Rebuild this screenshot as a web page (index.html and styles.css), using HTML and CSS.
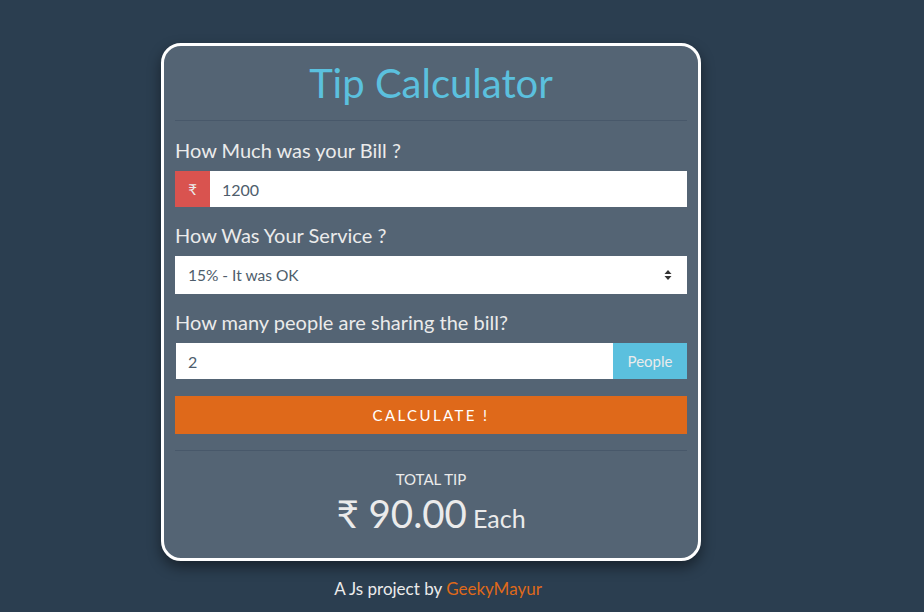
FILE: index.html
```html
<!DOCTYPE html>
<html>
<head>
<meta charset="utf-8">
<link rel="stylesheet" href="styles.css">
</head>
<body>
<div class="page">
  <div class="card">
    <h1 class="title">Tip Calculator</h1>
    <hr class="rule">
    <label class="label">How Much was your Bill ?</label>
    <div class="group">
      <span class="addon addon-red">₹</span>
      <input class="field" type="text" value="1200">
    </div>
    <label class="label">How Was Your Service ?</label>
    <div class="select">
      <span>15% - It was OK</span>
      <svg class="caret" width="8" height="12" viewBox="0 0 8 12"><path d="M4 1 L7.5 5 H0.5 Z M4 11 L7.5 7 H0.5 Z" fill="#333"/></svg>
    </div>
    <label class="label">How many people are sharing the bill?</label>
    <div class="group">
      <input class="field field-left" type="text" value="2">
      <span class="addon addon-blue">People</span>
    </div>
    <button class="btn">CALCULATE !</button>
    <hr class="rule rule-bottom">
    <div class="total">
      <div class="total-label">TOTAL TIP</div>
      <div class="total-amount"><span class="amount">₹ 90.00</span> <span class="each">Each</span></div>
    </div>
  </div>
  <footer class="footer">A Js project by <a class="link">GeekyMayur</a></footer>
</div>
</body>
</html>
```
FILE: styles.css
```css
* { box-sizing: border-box; }
html, body { margin: 0; padding: 0; }
body {
  background: #2b3e50;
  font-family: Lato, "Open Sans", sans-serif;
  color: #ebebeb;
  height: 612px;
  overflow: hidden;
}
.page {
  width: 540px;
  margin-left: 161px;
  padding-top: 43px;
}
.card {
  background: #546474;
  border: 3px solid #ffffff;
  border-radius: 20px;
  padding: 0 11px 12px;
  box-shadow: 0 6px 14px rgba(0,0,0,0.45);
}
.title {
  margin: 0;
  padding-top: 12px;
  text-align: center;
  font-weight: 400;
  font-size: 40px;
  line-height: 50px;
  color: #5bc0de;
}
.rule {
  border: 0;
  border-top: 1px solid #48586a;
  margin: 12px 0 17px;
}
.label {
  display: block;
  font-size: 20px;
  line-height: 24px;
  margin-bottom: 9px;
  color: #ebebeb;
}
.group {
  display: flex;
  height: 36px;
  margin-bottom: 16px;
}
.addon {
  display: flex;
  align-items: center;
  justify-content: center;
  font-size: 15px;
  color: #ebebeb;
}
.addon-red { width: 35px; background: #d9534f; }
.addon-blue { width: 74px; background: #5bc0de; }
.field {
  flex: 1;
  border: 0;
  outline: none;
  background: #fff;
  font-family: Lato, sans-serif;
  font-size: 16px;
  color: #4e5d6c;
  padding: 0 12px;
  margin: 0;
  height: 36px;
  min-width: 0;
}
.field-left { margin-left: 1px; }
.select {
  display: flex;
  align-items: center;
  justify-content: space-between;
  height: 38px;
  background: #fff;
  color: #4e5d6c;
  font-size: 15.5px;
  padding: 0 15px 0 13px;
  margin-bottom: 16px;
}
.btn {
  display: block;
  width: 100%;
  height: 38px;
  border: 0;
  margin: 17px 0 0;
  background: #df691a;
  color: #fff;
  font-family: Lato, sans-serif;
  font-size: 15px;
  letter-spacing: 2.4px;
}
.rule-bottom { margin: 16px 0 18px; }
.total { text-align: center; }
.total-label {
  font-size: 15px;
  line-height: 20px;
}
.total-amount {
  line-height: 48px;
}
.amount { font-size: 38.5px; }
.each { font-size: 25px; margin-left: 2px; }
.footer {
  text-align: center;
  font-size: 17px;
  margin-top: 17px;
  padding-left: 14px;
}
.link { color: #df691a; text-decoration: none; }
```
